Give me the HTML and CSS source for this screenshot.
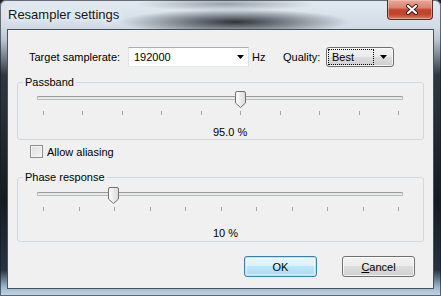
FILE: index.html
```html
<!DOCTYPE html>
<html lang="en">
<head>
    <meta charset="UTF-8">
    <meta name="viewport" content="width=device-width, initial-scale=1.0">
    <title>Resampler settings</title>
    <link rel="stylesheet" href="styles.css">
</head>
<body>
    <div class="window">
        <div class="titlebar">
            <span class="title">Resampler settings</span>
            <button class="close-btn" title="Close">
                <svg width="12" height="11" viewBox="0 0 12 11">
                    <path d="M2,2 L10,9 M10,2 L2,9" stroke="#3b1510" stroke-width="4" stroke-linecap="round"/>
                    <path d="M2,2 L10,9 M10,2 L2,9" stroke="#fff" stroke-width="2.2" stroke-linecap="round"/>
                </svg>
            </button>
        </div>

        <div class="client">
            <div class="rate-row">
                <label class="rate-label" for="rate">Target samplerate:</label>
                <div class="combo" id="rate">
                    <span>192000</span>
                    <svg class="arrow" width="7" height="4" viewBox="0 0 7 4"><path d="M0,0 H7 L3.5,4 Z" fill="#000"/></svg>
                </div>
                <span class="unit">Hz</span>
                <label class="quality-label">Quality:</label>
                <div class="dropdown">
                    <span class="focus">Best</span>
                    <svg class="arrow" width="7" height="4" viewBox="0 0 7 4"><path d="M0,0 H7 L3.5,4 Z" fill="#000"/></svg>
                </div>
            </div>

            <fieldset class="group passband">
                <legend>Passband</legend>
                <div class="slider">
                    <div class="track"></div>
                    <svg class="thumb" style="left: 198px" width="11" height="17" viewBox="0 0 11 17">
                        <defs>
                            <linearGradient id="tg1" x1="0" y1="0" x2="1" y2="0">
                                <stop offset="0" stop-color="#ffffff"/>
                                <stop offset="1" stop-color="#d9d9d9"/>
                            </linearGradient>
                        </defs>
                        <path d="M0.5,2 Q0.5,0.5 2,0.5 H9 Q10.5,0.5 10.5,2 V12 L5.5,16.5 L0.5,12 Z" fill="url(#tg1)" stroke="#707070"/>
                    </svg>
                </div>
                <div class="ticks">
                    <span></span><span></span><span></span><span></span><span></span>
                    <span></span><span></span><span></span><span></span><span></span>
                </div>
                <div class="value">95.0 %</div>
            </fieldset>

            <label class="check-row">
                <span class="checkbox"></span>
                <span>Allow aliasing</span>
            </label>

            <fieldset class="group phase">
                <legend>Phase response</legend>
                <div class="slider">
                    <div class="track"></div>
                    <svg class="thumb" style="left: 71px" width="11" height="17" viewBox="0 0 11 17">
                        <defs>
                            <linearGradient id="tg2" x1="0" y1="0" x2="1" y2="0">
                                <stop offset="0" stop-color="#ffffff"/>
                                <stop offset="1" stop-color="#d9d9d9"/>
                            </linearGradient>
                        </defs>
                        <path d="M0.5,2 Q0.5,0.5 2,0.5 H9 Q10.5,0.5 10.5,2 V12 L5.5,16.5 L0.5,12 Z" fill="url(#tg2)" stroke="#707070"/>
                    </svg>
                </div>
                <div class="ticks">
                    <span></span><span></span><span></span><span></span><span></span><span></span>
                    <span></span><span></span><span></span><span></span><span></span>
                </div>
                <div class="value">10 %</div>
            </fieldset>

            <div class="buttons">
                <button class="btn btn-default">OK</button>
                <button class="btn"><u>C</u>ancel</button>
            </div>
        </div>
    </div>
</body>
</html>
```

FILE: styles.css
```css
* {
    box-sizing: border-box;
}
html, body {
    margin: 0;
}
body {
    width: 441px;
    height: 296px;
    overflow: hidden;
    font-family: "Liberation Sans", Arial, sans-serif;
    font-size: 11px;
    color: #000;
    background: #1c2229;
}

/* window frame */
.window {
    width: 441px;
    height: 296px;
    display: flex;
    flex-direction: column;
    padding: 0 7px 7px;
    border-radius: 6px 6px 0 0;
    box-shadow: inset 0 0 0 1px rgba(20, 28, 36, 0.6);
    background:
        radial-gradient(ellipse 115px 13px at 235px 22px, rgba(18, 22, 26, 0.85), rgba(18, 22, 26, 0)),
        radial-gradient(ellipse 90px 7px at 225px 4px, rgba(70, 80, 92, 0.45), rgba(70, 80, 92, 0)),
        linear-gradient(to bottom, #e2e9f0 0, #d3dde7 26px, #b9c5d0 40px, #2e3740 75px, #161b21 200px, #26333f 270px, #9db6cf 287px, #c5d7e8 296px);
}
.titlebar {
    height: 29px;
    display: flex;
    align-items: center;
    padding-left: 1px;
}
.title {
    flex: 1;
    font-size: 13px;
    color: #161616;
    text-shadow: 0 0 6px #fff, 0 0 10px rgba(255, 255, 255, 0.8);
}
.close-btn {
    align-self: flex-start;
    width: 46px;
    height: 20px;
    margin-right: 1px;
    padding: 0 0 0 4px;
    display: flex;
    align-items: center;
    justify-content: center;
    border: 1px solid #5c2a22;
    border-top: none;
    border-radius: 0 0 4px 4px;
    background: linear-gradient(to bottom, #e8a898 0, #d98373 40%, #c4452f 52%, #c2432d 75%, #dc7a60 100%);
    box-shadow: inset 0 0 0 1px rgba(255, 210, 200, 0.45);
}

/* client area */
.client {
    flex: 1;
    display: flex;
    flex-direction: column;
    background: #f0f0f0;
    border: 1px solid #47525d;
}
.rate-row {
    display: flex;
    align-items: center;
    height: 20px;
    margin-top: 17px;
    padding-left: 21px;
}
.rate-label {
    width: 99px;
}
.combo {
    width: 121px;
    height: 20px;
    display: flex;
    align-items: center;
    justify-content: space-between;
    padding: 0 4px 0 5px;
    background: #fff;
    border: 1px solid #abadb3;
    border-bottom-color: #e3e9ef;
    border-left-color: #e2e3ea;
    border-right-color: #dbdfe6;
}
.unit {
    width: 31px;
    margin-left: 3px;
}
.quality-label {
    width: 43px;
}
.dropdown {
    width: 68px;
    height: 20px;
    display: flex;
    align-items: center;
    justify-content: space-between;
    padding: 1px 6px 1px 1px;
    border: 1px solid #707070;
    border-radius: 3px;
    background: linear-gradient(to bottom, #f2f2f2 0, #ebebeb 50%, #dddddd 50%, #cfcfcf 100%);
    box-shadow: inset 0 0 0 1px rgba(255, 255, 255, 0.7);
}
.dropdown .focus {
    width: 46px;
    height: 16px;
    line-height: 14px;
    padding-left: 3px;
    border: 1px dotted #000;
}

/* group boxes */
.group {
    margin: 9px 9px 0;
    padding: 0;
    border: 1px solid #d0d9df;
    border-radius: 3px;
}
.group legend {
    margin-left: 5px;
    padding: 0 2px;
    line-height: 13px;
}
.slider {
    position: relative;
    height: 18px;
    margin: 0 20px 0 19px;
    padding-top: 7px;
}
.track {
    height: 4px;
    border: 1px solid #bcbcbc;
    border-top-color: #9a9a9a;
    border-radius: 1px;
    background: #e7eaea;
}
.thumb {
    position: absolute;
    top: 2px;
}
.ticks {
    display: flex;
    justify-content: space-between;
    height: 4px;
    margin: 4px 24px 0 25px;
}
.ticks span {
    width: 1px;
    background: #a3a3a3;
}
.value {
    margin-top: 11px;
    padding-left: 195px;
    line-height: 13px;
}
.phase .slider {
    margin-top: 1px;
}
.phase .value {
    margin-top: 16px;
    padding-bottom: 1px;
}
.check-row {
    display: flex;
    align-items: center;
    height: 13px;
    margin-top: 5px;
    padding-left: 22px;
}
.checkbox {
    width: 13px;
    height: 13px;
    margin-right: 4px;
    border: 1px solid #8e8f8f;
    background: linear-gradient(135deg, #dcdcdc 0, #f6f6f6 100%);
    box-shadow: inset 0 0 0 1px #f4f4f4;
}
.phase {
    margin-top: 13px;
}

/* dialog buttons */
.buttons {
    display: flex;
    justify-content: flex-end;
    gap: 25px;
    margin-top: 14px;
    padding-right: 18px;
}
.btn {
    width: 73px;
    height: 21px;
    padding: 0;
    font-family: inherit;
    font-size: 11px;
    color: #000;
    border: 1px solid #707070;
    border-radius: 3px;
    background: linear-gradient(to bottom, #f2f2f2 0, #ebebeb 50%, #dddddd 50%, #cfcfcf 100%);
    box-shadow: inset 0 0 0 1px rgba(255, 255, 255, 0.75);
}
.btn-default {
    border-color: #3c7fb1;
    background: linear-gradient(to bottom, #eaf6fd 0, #d9f0fc 50%, #bee6fd 50%, #a7d9f5 100%);
    box-shadow: inset 0 0 0 1px #b5e3f8, inset 0 0 0 2px rgba(255, 255, 255, 0.5);
}
```
